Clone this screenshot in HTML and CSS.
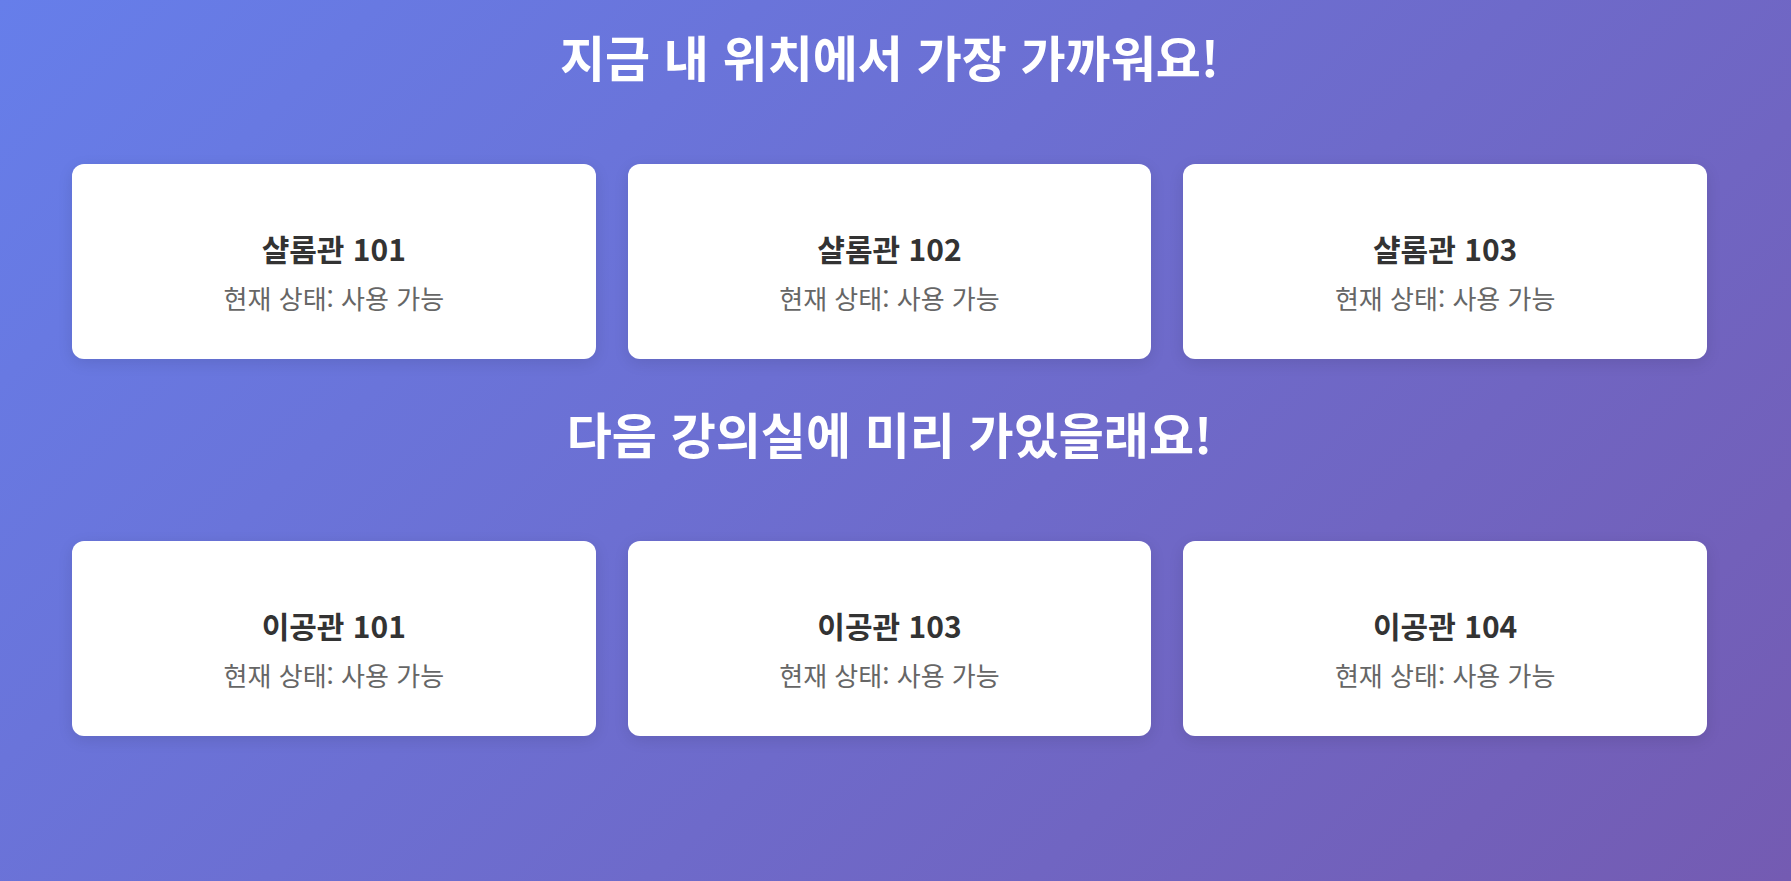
FILE: index.html
```html
<!DOCTYPE html>
<html lang="ko">
<head>
  <meta charset="UTF-8" />
  <meta name="viewport" content="width=device-width, initial-scale=1.0"/>
  <title>빈 강의실 찾기</title>
  <link rel="stylesheet" href="styles.css">
</head>
<body>
  <div class="page">
    <h2 class="section-title">지금 내 위치에서 가장 가까워요!</h2>
    <div class="room-list">
      <div class="room-card">
        <h3>샬롬관 101</h3>
        <p>현재 상태: 사용 가능</p>
      </div>
      <div class="room-card">
        <h3>샬롬관 102</h3>
        <p>현재 상태: 사용 가능</p>
      </div>
      <div class="room-card">
        <h3>샬롬관 103</h3>
        <p>현재 상태: 사용 가능</p>
      </div>
    </div>

    <h2 class="section-title">다음 강의실에 미리 가있을래요!</h2>
    <div class="room-list">
      <div class="room-card">
        <h3>이공관 101</h3>
        <p>현재 상태: 사용 가능</p>
      </div>
      <div class="room-card">
        <h3>이공관 103</h3>
        <p>현재 상태: 사용 가능</p>
      </div>
      <div class="room-card">
        <h3>이공관 104</h3>
        <p>현재 상태: 사용 가능</p>
      </div>
    </div>
  </div>
</body>
</html>
```

FILE: styles.css
```css
html, body {
  margin: 0;
  padding: 0;
  min-height: 100%;
}
body {
  background: linear-gradient(135deg, #667eea 0%, #745bb2 100%);
  font-family: "Noto Sans CJK KR", "Noto Sans", sans-serif;
  min-height: 881px;
}
.page {
  padding: 26px 84px 0 72px;
}
.section-title {
  margin: 0 0 79px;
  text-align: center;
  color: #fff;
  font-size: 49px;
  font-weight: 700;
  line-height: 59px;
}
.room-list {
  display: grid;
  grid-template-columns: repeat(3, 1fr);
  gap: 32px;
  margin-bottom: 44px;
}
.room-card {
  background: #fff;
  border-radius: 12px;
  box-shadow: 0 4px 15px rgba(0, 0, 0, 0.1);
  height: 195px;
  box-sizing: border-box;
  padding: 66px 20px 0;
  text-align: center;
}
.room-card h3 {
  margin: 0 0 16px;
  color: #333;
  font-size: 30px;
  font-weight: 700;
  line-height: 36px;
}
.room-card p {
  margin: 0;
  color: #666;
  font-size: 26px;
  line-height: 31px;
}
```
